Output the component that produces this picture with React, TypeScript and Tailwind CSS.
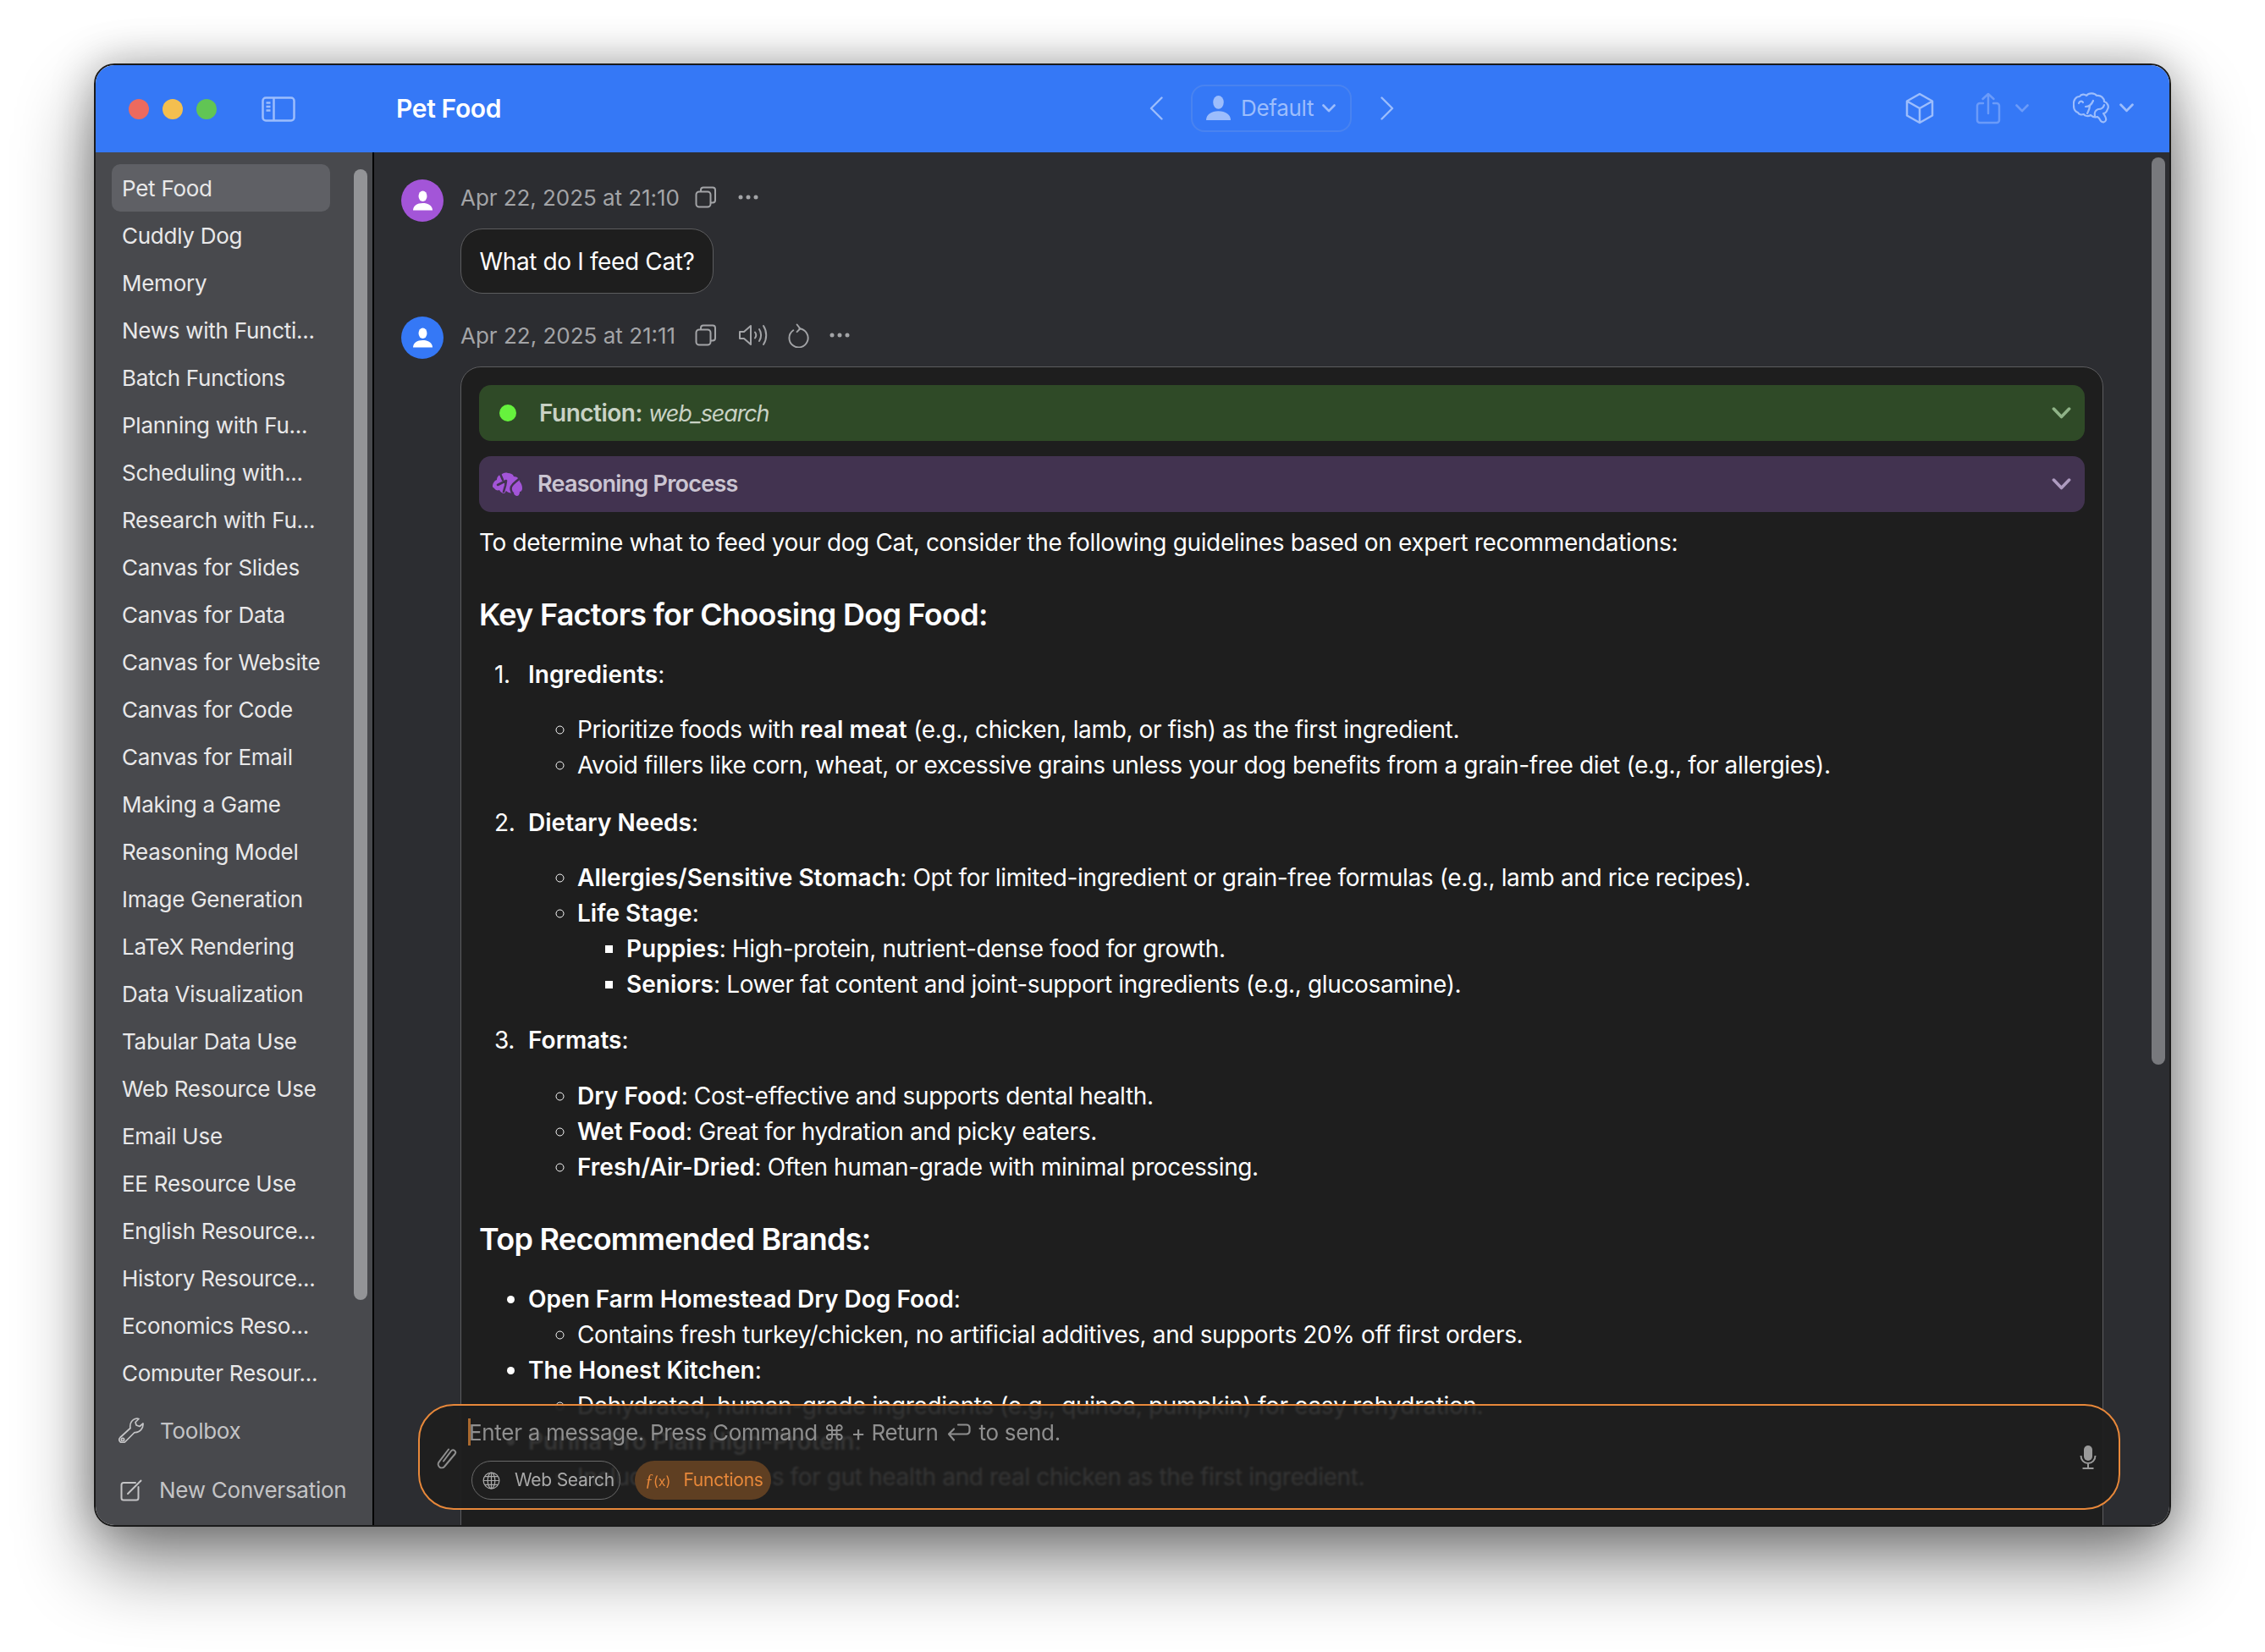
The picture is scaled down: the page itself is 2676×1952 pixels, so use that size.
import React from 'react';

const chats = [
  'Pet Food', 'Cuddly Dog', 'Memory', 'News with Functi...', 'Batch Functions', 'Planning with Fu...',
  'Scheduling with...', 'Research with Fu...', 'Canvas for Slides', 'Canvas for Data', 'Canvas for Website',
  'Canvas for Code', 'Canvas for Email', 'Making a Game', 'Reasoning Model', 'Image Generation',
  'LaTeX Rendering', 'Data Visualization', 'Tabular Data Use', 'Web Resource Use', 'Email Use',
  'EE Resource Use', 'English Resource...', 'History Resource...', 'Economics Reso...', 'Computer Resour...',
];

const PersonIcon = ({ className }: { className?: string }) => (
  <svg viewBox="0 0 24 24" className={className} fill="currentColor">
    <ellipse cx="12" cy="6.500" rx="5.200" ry="6.500" />
    <path d="M0 24c0-5.500 5-9 12-9s12 3.500 12 9z" />
  </svg>
);

const Avatar = ({ color }: { color: string }) => (
  <div className={`w-[50px] h-[50px] rounded-full flex items-center justify-center shrink-0 text-white ${color}`}>
    <PersonIcon className="w-[23px] h-[24px]" />
  </div>
);

const Chev = ({ className }: { className?: string }) => (
  <svg viewBox="0 0 16 10" className={className} fill="none" stroke="currentColor" strokeWidth="2.600" strokeLinecap="round" strokeLinejoin="round">
    <path d="M1.500 1.500 8 8.200l6.500-6.700" />
  </svg>
);

const CopyIcon = () => (
  <svg viewBox="0 0 26 26" className="w-[26px] h-[26px]" fill="none" stroke="currentColor" strokeWidth="2">
    <rect x="1.500" y="6.500" width="17" height="18" rx="3.500" />
    <path d="M7 6.500V4.500a3 3 0 0 1 3-3h11a3 3 0 0 1 3 3v12a3 3 0 0 1-3 3h-2.500" />
  </svg>
);

const DotsIcon = () => (
  <svg viewBox="0 0 24 6" className="w-[24px] h-[6px]" fill="currentColor">
    <circle cx="3" cy="3" r="2.500" />
    <circle cx="12" cy="3" r="2.500" />
    <circle cx="21" cy="3" r="2.500" />
  </svg>
);

const SpeakerIcon = () => (
  <svg viewBox="0 0 36 28" className="w-[36px] h-[28px]" fill="none" stroke="currentColor" strokeWidth="2" strokeLinecap="round" strokeLinejoin="round">
    <path d="M2 10v8h5l8 7V3L7 10z" />
    <path d="M20 10.500c1.500 2 1.500 5 0 7" />
    <path d="M25 7c2.800 4 2.800 10 0 14" />
    <path d="M30 3c4.300 6.500 4.300 15.500 0 22" />
  </svg>
);

const RetryIcon = () => (
  <svg viewBox="0 0 28 30" className="w-[27px] h-[29px]" fill="none" stroke="currentColor" strokeWidth="2" strokeLinecap="round" strokeLinejoin="round">
    <path d="M15 6.500A11.500 11.500 0 1 1 7.500 8.500" />
    <path d="M12 1.500l4 5-4 4" />
  </svg>
);

// solid brain on the reasoning bar, the cuts are drawn in the bar colour
const BrainFill = () => (
  <svg viewBox="0 0 35 29" className="w-[35px] h-[29px]">
    <path fill="#A355D8" d="M0 17C0 13 2 10 5 9 5 6 7 3 10 3c2-2 5-3 8-2 3 0 6 1 7 4 4 0 7 3 7 6 2 2 3 5 3 8 0 2-1 4-3 4 0 2-1 5-3 5-2 0-4-2-5-4-3 1-6 0-8-2l-2 3c-3 0-5-2-6-4-2 1-5 0-6-2-1-1-2-1-2-2z" />
    <path fill="none" stroke="#423350" strokeWidth="2.600" strokeLinecap="round" strokeLinejoin="round" d="M9 2 12 9M6 15l6-3 4-2M31 8c-3 3-7 5-9 9-1 3 0 6 2 8M13 23l2-7 1-6" />
  </svg>
);

const BrainLine = () => (
  <svg viewBox="0 0 43 37" className="w-[43px] h-[37px]" fill="none" stroke="currentColor" strokeWidth="2.200" strokeLinecap="round" strokeLinejoin="round">
    <path d="M1 16C0 9 4 5 8 5c2-3 6-3 8-1 3-4 10-3 12 0 5-1 9 3 9 7 4 1 6 6 4 9-1 3-3 5-5 5 2 3 4 6 3 8-1 3-4 3-6 1-1-2-2-4-4-5-3 1-6 0-8-2-3 2-7 1-8-1-3 1-6 0-7-2-3-1-5-4-5-8z" />
    <path d="M7 13c1-3 4-3 5-1M15 17c3 0 7-2 9-7M20 16c0 4-2 7-3 9M37 15c-1 4-4 5-7 5-3 1-5 4-4 8" />
  </svg>
);

const WrenchIcon = () => (
  <svg viewBox="0 0 30 30" className="w-[30px] h-[30px]" fill="none" stroke="currentColor" strokeWidth="1.700" strokeLinejoin="round">
    <path d="M2 23.500 14 12.500C13 8 15 2 22 1l2 .5-4 4 1 3.500 4 1.500 4-3.500c.5 6-4 11-10 10.500L7.500 29C5 30 2.500 29.500 1.500 28c-1-1.500-1-3 .5-4.500z" />
    <circle cx="5" cy="26" r="1.700" />
  </svg>
);

const NewChatIcon = () => (
  <svg viewBox="0 0 26 26" className="w-[26px] h-[26px]" fill="none" stroke="currentColor" strokeWidth="2" strokeLinecap="round">
    <path d="M18 4H4a2.500 2.500 0 0 0-2.500 2.500V22A2.500 2.500 0 0 0 4 24.500h15a2.500 2.500 0 0 0 2.500-2.500V9" />
    <path d="M9 17 24.500 1.500" />
  </svg>
);

const ClipIcon = ({ className }: { className?: string }) => (
  <svg viewBox="0 0 24 28" className={className} fill="none" stroke="currentColor" strokeWidth="2" strokeLinecap="round">
    <path d="M8 18.500 17 6.500a2.800 2.800 0 0 1 4.500 3.500L9 25a4.200 4.200 0 0 1-6.500-5.300L14 4.500" />
  </svg>
);

const GlobeIcon = () => (
  <svg viewBox="0 0 22 22" className="w-[21px] h-[21px]" fill="none" stroke="currentColor" strokeWidth="1.300">
    <circle cx="11" cy="11" r="9.800" />
    <ellipse cx="11" cy="11" rx="4.500" ry="9.800" />
    <path d="M11 1.200v19.600M1.200 11h19.600M2.600 6h16.800M2.600 16h16.800" />
  </svg>
);

const MicIcon = ({ className }: { className?: string }) => (
  <svg viewBox="0 0 20 28" className={className} fill="none" stroke="currentColor" strokeWidth="2">
    <rect x="5" y="0" width="10" height="18" rx="5" fill="currentColor" stroke="none" />
    <path d="M1.500 12c0 5 3.500 9 8.500 9s8.500-4 8.500-9M10 21v5M3.500 27h13" />
  </svg>
);

const Bar = ({ color, chevron, children }: { color: string; chevron: string; children: React.ReactNode }) => (
  <div className={`h-[66px] rounded-[14px] flex items-center justify-between pr-[16px] ${color}`}>
    <div className="flex items-center">{children}</div>
    <Chev className={`w-[23px] h-[14px] ${chevron}`} />
  </div>
);

const B = ({ children }: { children: React.ReactNode }) => (
  <b className="font-semibold tracking-[0.001em]">{children}</b>
);

const NumItem = ({ n, className, children }: { n: number; className?: string; children: React.ReactNode }) => (
  <li className={`flex ${className ?? ''}`}>
    <span className="w-[58px] shrink-0 pl-[18px]">{n}.</span>
    <div className="min-w-0">{children}</div>
  </li>
);

export default function App() {
  return (
    <div className="w-[2676px] h-[1952px] bg-white pt-[75px] pl-[111px] font-['Inter',sans-serif] overflow-hidden">
      <div className="w-[2454px] h-[1729px] rounded-[24px] border-2 border-[#1b1b1b] overflow-hidden flex flex-col shadow-[0_44px_90px_rgba(0,0,0,0.48),0_0_50px_rgba(0,0,0,0.28)]">
        {/* Title bar */}
        <header className="h-[103px] shrink-0 bg-[#3578F6] flex items-center text-[#9CBDFC]">
          <div className="flex items-center gap-[16px] ml-[39px]">
            <span className="w-[24px] h-[24px] rounded-full bg-[#EC6A5E]" />
            <span className="w-[24px] h-[24px] rounded-full bg-[#F4BF4F]" />
            <span className="w-[24px] h-[24px] rounded-full bg-[#61C554]" />
          </div>
          <svg viewBox="0 0 40 30" className="w-[40px] h-[30px] ml-[53px] shrink-0" fill="none" stroke="currentColor" strokeWidth="2.500">
            <rect x="1.500" y="1.500" width="37" height="27" rx="3.500" />
            <path d="M14.500 1.500v27M5.500 7.500h5M5.500 12h5M5.500 16.500h5" />
          </svg>
          <span className="ml-[119px] w-[890px] shrink-0 text-[30px] font-semibold text-white tracking-[-0.012em]">Pet Food</span>

          <svg viewBox="0 0 16 28" className="mb-[2px] w-[16px] h-[28px] shrink-0" fill="none" stroke="currentColor" strokeWidth="2.400" strokeLinecap="round" strokeLinejoin="round">
            <path d="M14.500 1.500 2 14l12.500 12.500" />
          </svg>
          <div className="ml-[33px] mb-[2px] w-[190px] h-[56px] shrink-0 rounded-[16px] border-2 border-[#4983F0] flex items-center pl-[16px]">
            <PersonIcon className="w-[29px] h-[29px]" />
            <span className="ml-[12px] text-[26px] tracking-[-0.012em]">Default</span>
            <Chev className="ml-[10px] w-[16px] h-[10px]" />
          </div>
          <svg viewBox="0 0 16 28" className="ml-[34px] mb-[2px] w-[16px] h-[28px] shrink-0" fill="none" stroke="currentColor" strokeWidth="2.400" strokeLinecap="round" strokeLinejoin="round">
            <path d="M1.500 1.500 14 14 1.500 26.500" />
          </svg>

          <div className="ml-[604px] mb-[2px] flex items-center">
            <svg viewBox="0 0 34 38" className="w-[34px] h-[38px]" fill="none" stroke="currentColor" strokeWidth="2.500" strokeLinejoin="round">
              <path d="M17 2 32 10.500v17L17 36 2 27.500v-17zM2 10.500 17 19l15-8.500M17 19v17" />
            </svg>
            <svg viewBox="0 0 30 38" className="ml-[49px] w-[30px] h-[38px] text-[#6B9BF9]" fill="none" stroke="currentColor" strokeWidth="2.500" strokeLinejoin="round" strokeLinecap="round">
              <path d="M9 13H5a3 3 0 0 0-3 3v17a3 3 0 0 0 3 3h20a3 3 0 0 0 3-3V16a3 3 0 0 0-3-3h-4" />
              <path d="M15 25V2M8.500 8 15 2l6.500 6" />
            </svg>
            <Chev className="ml-[17px] w-[16px] h-[10px] text-[#6B9BF9]" />
            <span className="ml-[52px] flex"><BrainLine /></span>
            <Chev className="ml-[12px] w-[17px] h-[11px]" />
          </div>
        </header>

        <div className="flex-1 min-h-0 flex">
          {/* Sidebar */}
          <aside className="w-[327px] shrink-0 bg-[#48494D] flex flex-col relative">
            <div className="h-[1452px] shrink-0 overflow-hidden pt-[14px] pl-[19px] pr-[50px]">
              {chats.map((c, i) => (
                <div
                  key={c}
                  className={`h-[56px] shrink-0 rounded-[10px] px-[12px] flex items-center text-[26px] tracking-[-0.01em] text-[#E8E8E9] whitespace-nowrap ${i === 0 ? 'bg-[#5F6065]' : ''}`}
                >
                  {c}
                </div>
              ))}
            </div>
            <div className="absolute left-[305px] top-[20px] w-[16px] h-[1336px] rounded-full bg-[#939497]" />
            <div className="h-[70px] flex items-center pl-[27px] text-[#C4C4C6] mt-[23px]">
              <WrenchIcon />
              <span className="ml-[19px] text-[26px] tracking-[-0.01em]">Toolbox</span>
            </div>
            <div className="h-[71px] flex items-center pl-[29px] text-[#C4C4C6]">
              <NewChatIcon />
              <span className="ml-[20px] text-[26px] tracking-[-0.01em]">New Conversation</span>
            </div>
          </aside>

          {/* Conversation */}
          <main className="flex-1 min-w-0 bg-[#2C2D31] border-l-2 border-black relative overflow-hidden pt-[32px] pl-[32px] text-white">
            <div className="absolute left-[2100px] top-[6px] w-[16px] h-[1072px] rounded-full bg-[#78797D]" />

            <div className="flex items-start gap-[20px]">
              <Avatar color="bg-[#A355D8]" />
              <div className="flex items-center h-[42px] text-[#A3A4A7]">
                <span className="text-[26px] tracking-[-0.002em]">Apr 22, 2025 at 21:10</span>
                <span className="ml-[18px] flex"><CopyIcon /></span>
                <span className="ml-[25px] flex"><DotsIcon /></span>
              </div>
            </div>
            <div className="ml-[70px] mt-[8px] w-[299px] h-[77px] rounded-[26px] border border-[#5C5C5E] bg-[#1E1E1E] flex items-center justify-center text-[28px] tracking-[-0.013em]">
              What do I feed Cat?
            </div>

            <div className="flex items-start gap-[20px] mt-[27px]">
              <Avatar color="bg-[#3578F6]" />
              <div className="flex items-center h-[44px] text-[#A3A4A7]">
                <span className="text-[26px] tracking-[0em]">Apr 22, 2025 at 21:11</span>
                <span className="ml-[23px] flex"><CopyIcon /></span>
                <span className="ml-[25px] flex"><SpeakerIcon /></span>
                <span className="ml-[22px] flex"><RetryIcon /></span>
                <span className="ml-[23px] flex"><DotsIcon /></span>
              </div>
            </div>

            {/* Answer card */}
            <div className="ml-[70px] mt-[9px] w-[1941px] rounded-t-[24px] border border-[#5C5C5E] bg-[#1E1E1E] pt-[21px] px-[21px] pb-[200px] text-[28px] leading-[42px] tracking-[-0.013em]">
              <Bar color="bg-[#2F4A27]" chevron="text-[#8FB387]">
                <span className="ml-[24px] w-[20px] h-[20px] rounded-full bg-[#66F23D]" />
                <span className="ml-[27px] text-[#C9D2C5] tracking-[-0.018em]"><b className="font-semibold">Function:</b> <i className="text-[27px] tracking-[-0.042em]">web_search</i></span>
              </Bar>
              <div className="mt-[18px]">
                <Bar color="bg-[#423350]" chevron="text-[#AE9BC0]">
                  <span className="ml-[16px] flex"><BrainFill /></span>
                  <span className="ml-[18px] text-[#CBC5D2] font-semibold text-[27px] tracking-[-0.028em]">Reasoning Process</span>
                </Bar>
              </div>

              <p className="mt-[15px]">To determine what to feed your dog Cat, consider the following guidelines based on expert recommendations:</p>

              <h2 className="mt-[39px] text-[36px] leading-[50px] font-semibold tracking-[-0.02em]">Key Factors for Choosing Dog Food:</h2>

              <ol className="mt-[25px]">
                <NumItem n={1}>
                  <B>Ingredients</B>:
                  <ul className="mt-[23px] pl-[58px] list-[circle]">
                    <li>Prioritize foods with <B>real meat</B> (e.g., chicken, lamb, or fish) as the first ingredient.</li>
                    <li>Avoid fillers like corn, wheat, or excessive grains unless your dog benefits from a grain-free diet (e.g., for allergies).</li>
                  </ul>
                </NumItem>
                <NumItem n={2} className="mt-[26px]">
                  <B>Dietary Needs</B>:
                  <ul className="mt-[23px] pl-[58px] list-[circle]">
                    <li><B>Allergies/Sensitive Stomach</B>: Opt for limited-ingredient or grain-free formulas (e.g., lamb and rice recipes).</li>
                    <li>
                      <B>Life Stage</B>:
                      <ul className="pl-[58px] list-[square]">
                        <li><B>Puppies</B>: High-protein, nutrient-dense food for growth.</li>
                        <li><B>Seniors</B>: Lower fat content and joint-support ingredients (e.g., glucosamine).</li>
                      </ul>
                    </li>
                  </ul>
                </NumItem>
                <NumItem n={3} className="mt-[24px]">
                  <B>Formats</B>:
                  <ul className="mt-[24px] pl-[58px] list-[circle]">
                    <li><B>Dry Food</B>: Cost-effective and supports dental health.</li>
                    <li><B>Wet Food</B>: Great for hydration and picky eaters.</li>
                    <li><B>Fresh/Air-Dried</B>: Often human-grade with minimal processing.</li>
                  </ul>
                </NumItem>
              </ol>

              <h2 className="mt-[39px] text-[36px] leading-[50px] font-semibold tracking-[-0.02em]">Top Recommended Brands:</h2>

              <ul className="mt-[25px] pl-[58px] list-disc">
                <li>
                  <B>Open Farm Homestead Dry Dog Food</B>:
                  <ul className="pl-[58px] list-[circle]">
                    <li>Contains fresh turkey/chicken, no artificial additives, and supports 20% off first orders.</li>
                  </ul>
                </li>
                <li>
                  <B>The Honest Kitchen</B>:
                  <ul className="pl-[58px] list-[circle]">
                    <li>Dehydrated, human-grade ingredients (e.g., quinoa, pumpkin) for easy rehydration.</li>
                  </ul>
                </li>
                <li>
                  <B>Purina Pro Plan High-Protein</B>:
                  <ul className="pl-[58px] list-[circle]">
                    <li>Includes probiotics for gut health and real chicken as the first ingredient.</li>
                  </ul>
                </li>
              </ul>
            </div>

            {/* Composer floats over the message */}
            <div className="absolute left-[52px] top-[1479px] w-[2011px] h-[125px] rounded-[42px] border-2 border-[#E8883A] bg-[#1E1E1E]/90 backdrop-blur-[1px]">
              <div className="absolute left-[57px] top-[15px] w-[3px] h-[32px] bg-[#A8682E]" />
              <div className="absolute left-[58px] top-[12px] flex items-center text-[26px] leading-[40px] tracking-[-0.012em] text-[#8F8F8F] whitespace-nowrap">
                <span>Enter a message. Press Command ⌘ + Return</span>
                <svg viewBox="0 0 28 22" className="ml-[10px] w-[28px] h-[22px]" fill="none" stroke="currentColor" strokeWidth="2.200" strokeLinecap="round" strokeLinejoin="round">
                  <path d="M13 1.500h10a3.500 3.500 0 0 1 3.500 3.500v4a3.500 3.500 0 0 1-3.500 3.500H2M8 6.500l-6 6 6 7" />
                </svg>
                <span className="ml-[10px]">to send.</span>
              </div>
              <ClipIcon className="absolute left-[20px] top-[47px] w-[24px] h-[28px] text-[#8F8F8F]" />
              <div className="absolute left-[61px] top-[65px] flex gap-[17px]">
                <div className="w-[176px] h-[46px] rounded-full border border-[#6A6A6A] flex items-center pl-[12px] text-[#A9A9A9]">
                  <GlobeIcon />
                  <span className="ml-[17px] text-[21px] tracking-[-0.012em]">Web Search</span>
                </div>
                <div className="w-[161px] h-[46px] rounded-full bg-[#5F3F22] flex items-center pl-[12px] text-[#E8883A]">
                  <span className="text-[20px] italic font-['Liberation_Serif',serif]">ƒ<span className="not-italic font-['Inter',sans-serif] text-[16px]">(x)</span></span>
                  <span className="ml-[15px] text-[21px] tracking-[-0.012em]">Functions</span>
                </div>
              </div>
              <MicIcon className="absolute right-[26px] top-[47px] w-[20px] h-[28px] text-[#9A9A9A]" />
            </div>
          </main>
        </div>
      </div>
    </div>
  );
}
